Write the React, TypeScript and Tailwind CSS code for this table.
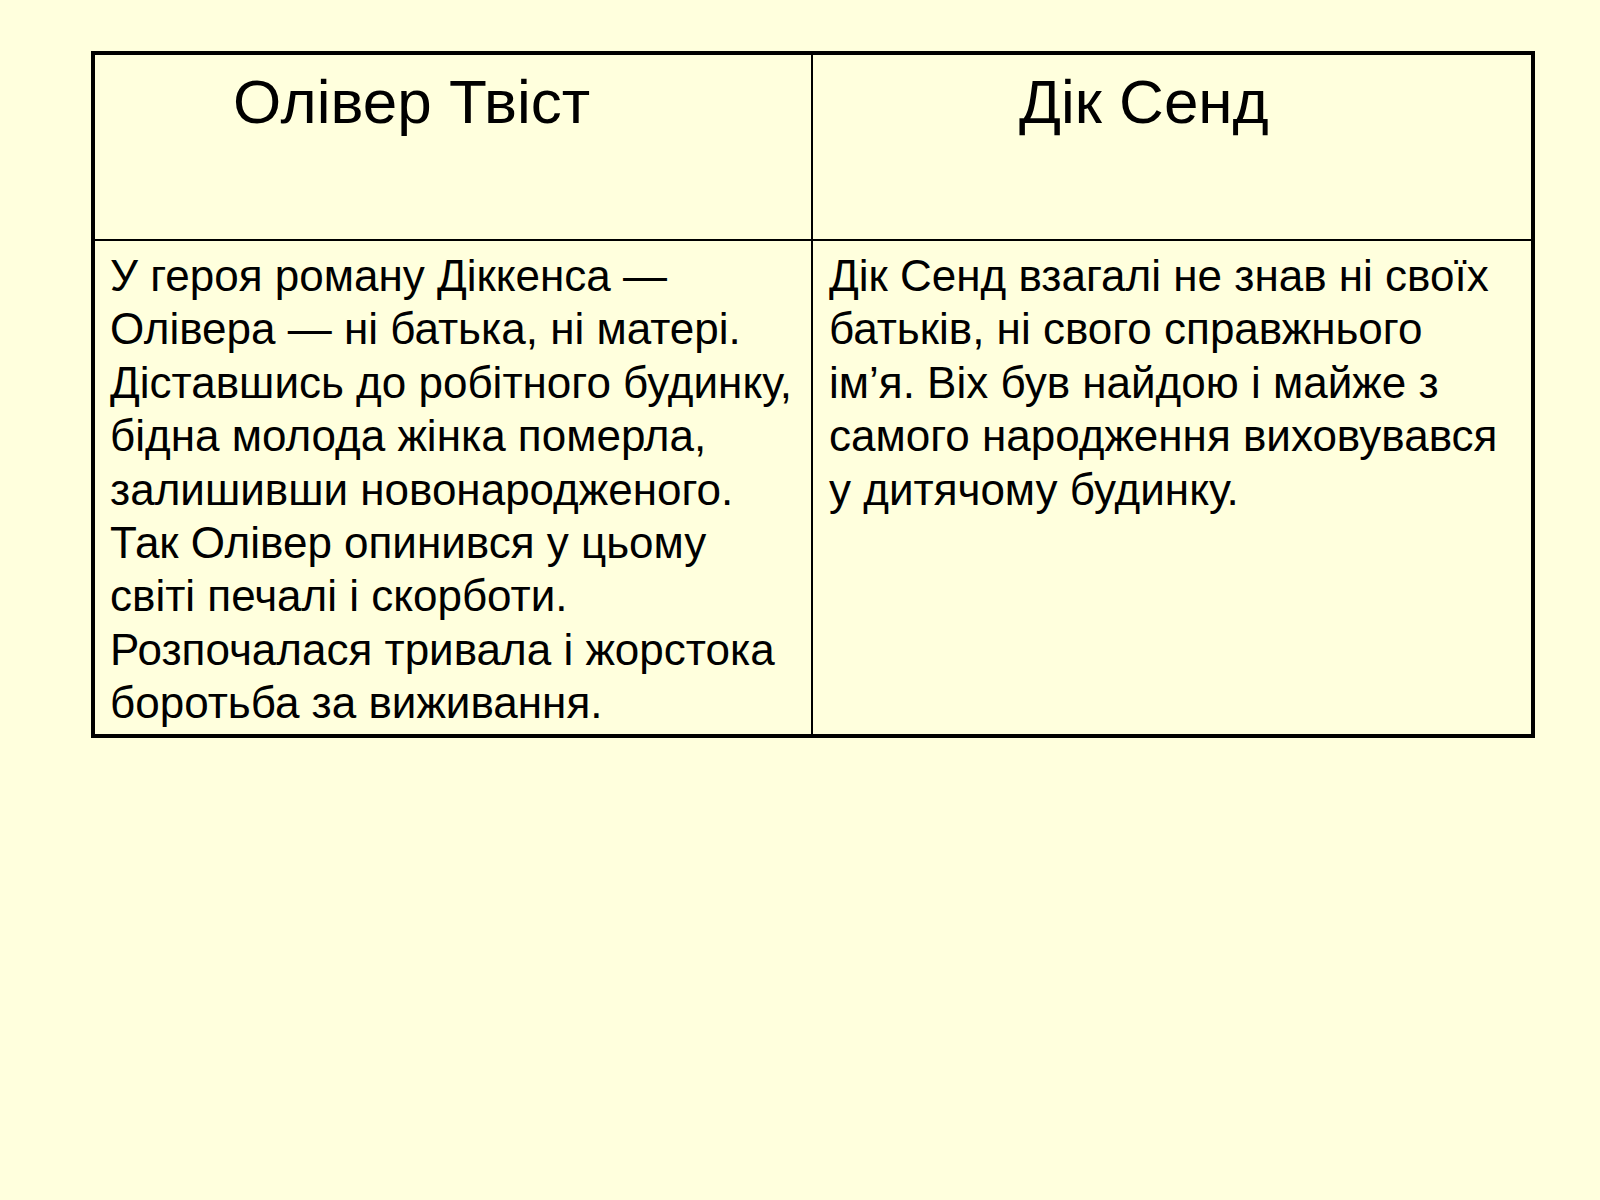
import React from "react";

const left = [
  "У героя роману Діккенса —",
  "Олівера — ні батька, ні матері.",
  "Діставшись до робітного будинку,",
  "бідна молода жінка померла,",
  "залишивши новонародженого.",
  "Так Олівер опинився у цьому",
  "світі печалі і скорботи.",
  "Розпочалася тривала і жорстока",
  "боротьба за виживання.",
];

const right = [
  "Дік Сенд взагалі не знав ні своїх",
  "батьків, ні свого справжнього",
  "ім’я. Віх був найдою і майже з",
  "самого народження виховувався",
  "у дитячому будинку.",
];

export default function App() {
  return (
    <div
      className="w-[1600px] h-[1200px] bg-[#FFFFDD] pl-[91px] pt-[51px] text-black"
      style={{ fontFamily: '"Liberation Sans", Arial, sans-serif' }}
    >
      <div className="w-[1444px] border-4 border-black grid grid-cols-2">
        <div className="h-[186px] border-r-2 border-b-2 border-black pl-[138px] pt-[10px] text-[62px] leading-[74px] whitespace-nowrap">
          Олівер Твіст
        </div>
        <div className="h-[186px] border-b-2 border-black pl-[206px] pt-[10px] text-[62px] leading-[74px] whitespace-nowrap">
          Дік Сенд
        </div>
        <div className="h-[493px] border-r-2 border-black pl-[15px] pt-[8px] text-[44px] leading-[53.4px]">
          {left.map((l, i) => (
            <div key={i} className="whitespace-nowrap">{l}</div>
          ))}
        </div>
        <div className="h-[493px] pl-[16px] pt-[8px] text-[44px] leading-[53.4px]">
          {right.map((l, i) => (
            <div key={i} className="whitespace-nowrap">{l}</div>
          ))}
        </div>
      </div>
    </div>
  );
}
